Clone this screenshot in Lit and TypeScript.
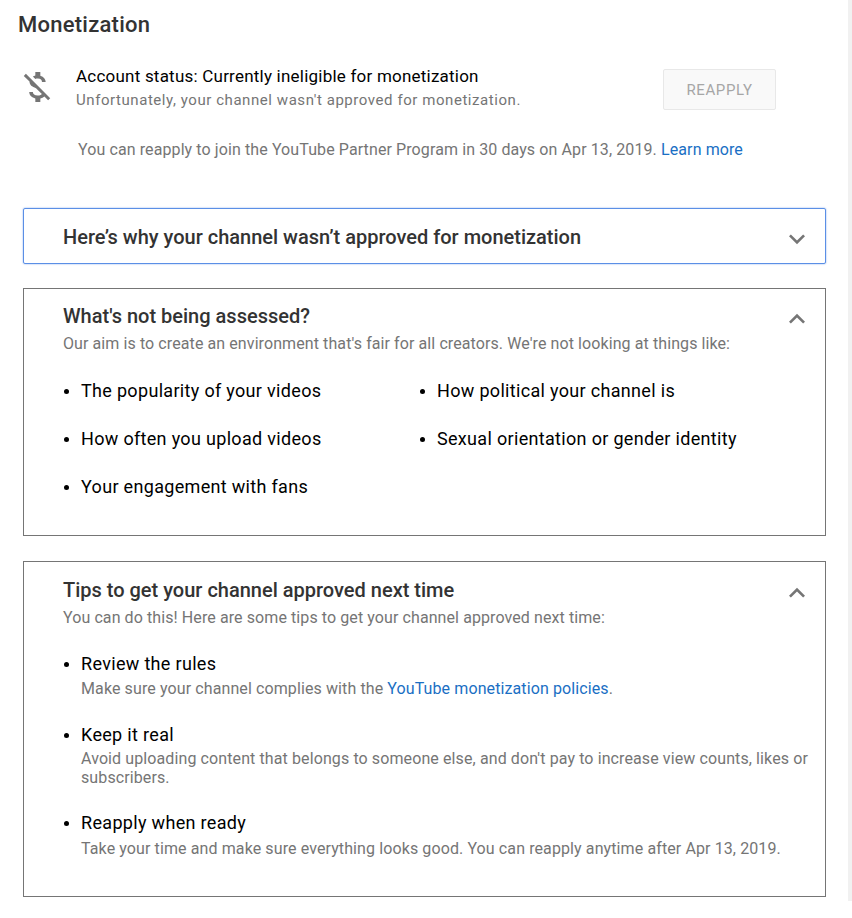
import { LitElement, html, css } from 'lit';
import { customElement } from 'lit/decorators.js';

const chevron = (up: boolean) => html`
  <svg class="chevron" viewBox="0 0 24 24">
    <path d=${up ? 'M12 8l-6 6 1.41 1.41L12 10.83l4.59 4.58L18 14z' : 'M16.59 8.59L12 13.17 7.41 8.59 6 10l6 6 6-6z'}></path>
  </svg>
`;

@customElement('app-root')
export class AppRoot extends LitElement {
  static styles = css`
    :host {
      display: flex;
      align-items: flex-start;
      width: 852px;
      height: 918px;
      background: #fff;
      font-family: Roboto, "Liberation Sans", sans-serif;
      color: #000;
      overflow: hidden;
    }
    .page {
      width: 848px;
      flex: none;
      box-sizing: border-box;
    }
    .scrollbar {
      width: 4px;
      height: 901px;
      background: #f1f1f1;
    }
    h1 {
      margin: 0;
      padding: 12px 0 0 18px;
      font-size: 22px;
      line-height: 26px;
      font-weight: 500;
      letter-spacing: 0.25px;
      color: #333;
    }
    .status {
      display: flex;
      align-items: flex-start;
      padding: 16px 0 0 17px;
    }
    .status-icon {
      width: 40px;
      height: 40px;
      margin-top: 13px;
      fill: #757575;
      flex: none;
    }
    .status-text {
      margin-left: 19px;
      width: 587px;
      flex: none;
      padding-top: 11px;
    }
    .status-title {
      font-size: 17px;
      line-height: 22px;
      letter-spacing: 0.22px;
    }
    .status-sub {
      font-size: 15px;
      line-height: 20px;
      letter-spacing: 0.56px;
      margin-top: 3px;
      color: #757575;
    }
    .reapply {
      width: 113px;
      height: 41px;
      margin-top: 15px;
      box-sizing: border-box;
      border: 1px solid #e8e8e8;
      border-radius: 2px;
      background: #f9f9f9;
      color: #a6a6a6;
      font-family: inherit;
      font-size: 15px;
      letter-spacing: 0.6px;
      padding: 0;
    }
    .reapply-note {
      padding: 29px 0 0 78px;
      font-size: 16px;
      line-height: 22px;
      letter-spacing: 0.1px;
      color: #757575;
    }
    a {
      color: #1a6fc4;
      text-decoration: none;
    }
    .box {
      margin-left: 23px;
      width: 803px;
      box-sizing: border-box;
      border: 1px solid #757575;
      padding: 0 0 0 39px;
      position: relative;
    }
    .box.collapsed {
      margin-top: 47px;
      height: 56px;
      padding-top: 2px;
      border-color: #5b8fe6;
      border-radius: 2px;
      box-shadow: 0 0 1.5px #5b8fe6;
      display: flex;
      align-items: center;
      font-size: 20px;
      font-weight: 500;
      color: #333;
    }
    .box.assessed {
      margin-top: 24px;
      height: 248px;
      padding-top: 14px;
    }
    .box.tips {
      margin-top: 25px;
      height: 336px;
      padding-top: 15px;
    }
    h2 {
      margin: 0;
      font-size: 20px;
      line-height: 26px;
      font-weight: 500;
      color: #333;
    }
    .lead {
      font-size: 16px;
      line-height: 22px;
      letter-spacing: 0.09px;
      margin-top: 4px;
      color: #757575;
    }
    .chevron {
      position: absolute;
      right: 12px;
      width: 32px;
      height: 32px;
      fill: #757575;
    }
    .collapsed .chevron { top: 14px; }
    .assessed .chevron { top: 14px; }
    .tips .chevron { top: 15px; }
    ul {
      margin: 0;
      padding: 0;
      list-style: none;
    }
    li {
      position: relative;
      padding-left: 18px;
      font-size: 18px;
      line-height: 24px;
      letter-spacing: 0.32px;
    }
    li::before {
      content: "";
      position: absolute;
      left: 1px;
      top: 10px;
      width: 5px;
      height: 5px;
      border-radius: 50%;
      background: #000;
    }
    .columns {
      display: grid;
      grid-template-columns: 356px 1fr;
      row-gap: 24px;
      margin-top: 24px;
    }
    .tip-list {
      margin-top: 23px;
      width: 755px;
    }
    .tip-list li:nth-child(2) { margin-top: 25px; }
    .tip-list li:nth-child(3) { margin-top: 24px; }
    .tip-desc {
      font-size: 16px;
      line-height: 19px;
      letter-spacing: 0.105px;
      color: #757575;
      margin-top: 3px;
    }
    li:nth-child(2) .tip-desc { margin-top: 2px; }
    li:nth-child(3) .tip-desc { margin-top: 4px; }
  `;

  render() {
    return html`
      <div class="page">
        <h1>Monetization</h1>
        <div class="status">
          <svg class="status-icon" viewBox="0 0 24 24">
            <path d="M12.5 6.9c1.78 0 2.44.85 2.5 2.1h2.21c-.07-1.72-1.12-3.3-3.21-3.81V3h-3v2.16c-.53.12-1.03.3-1.48.54l1.47 1.47c.41-.17.91-.27 1.51-.27zM5.33 4.06L4.06 5.33 7.5 8.77c0 2.08 1.56 3.22 3.91 3.91l3.51 3.51c-.34.48-1.05.91-2.42.91-2.06 0-2.87-.92-2.98-2.1h-2.2c.12 2.19 1.76 3.42 3.68 3.83V21h3v-2.15c.96-.18 1.82-.55 2.45-1.12l2.22 2.22 1.27-1.27L5.33 4.06z"></path>
          </svg>
          <div class="status-text">
            <div class="status-title">Account status: Currently ineligible for monetization</div>
            <div class="status-sub">Unfortunately, your channel wasn't approved for monetization.</div>
          </div>
          <button class="reapply">REAPPLY</button>
        </div>
        <div class="reapply-note">You can reapply to join the YouTube Partner Program in 30 days on Apr 13, 2019. <a href="#">Learn more</a></div>

        <div class="box collapsed">
          Here’s why your channel wasn’t approved for monetization
          ${chevron(false)}
        </div>

        <div class="box assessed">
          <h2>What's not being assessed?</h2>
          <div class="lead">Our aim is to create an environment that's fair for all creators. We're not looking at things like:</div>
          ${chevron(true)}
          <ul class="columns">
            <li>The popularity of your videos</li>
            <li>How political your channel is</li>
            <li>How often you upload videos</li>
            <li>Sexual orientation or gender identity</li>
            <li>Your engagement with fans</li>
          </ul>
        </div>

        <div class="box tips">
          <h2>Tips to get your channel approved next time</h2>
          <div class="lead">You can do this! Here are some tips to get your channel approved next time:</div>
          ${chevron(true)}
          <ul class="tip-list">
            <li>
              Review the rules
              <div class="tip-desc">Make sure your channel complies with the <a href="#">YouTube monetization policies</a>.</div>
            </li>
            <li>
              Keep it real
              <div class="tip-desc">Avoid uploading content that belongs to someone else, and don't pay to increase view counts, likes or subscribers.</div>
            </li>
            <li>
              Reapply when ready
              <div class="tip-desc">Take your time and make sure everything looks good. You can reapply anytime after Apr 13, 2019.</div>
            </li>
          </ul>
        </div>
      </div>
      <div class="scrollbar"></div>
    `;
  }
}
